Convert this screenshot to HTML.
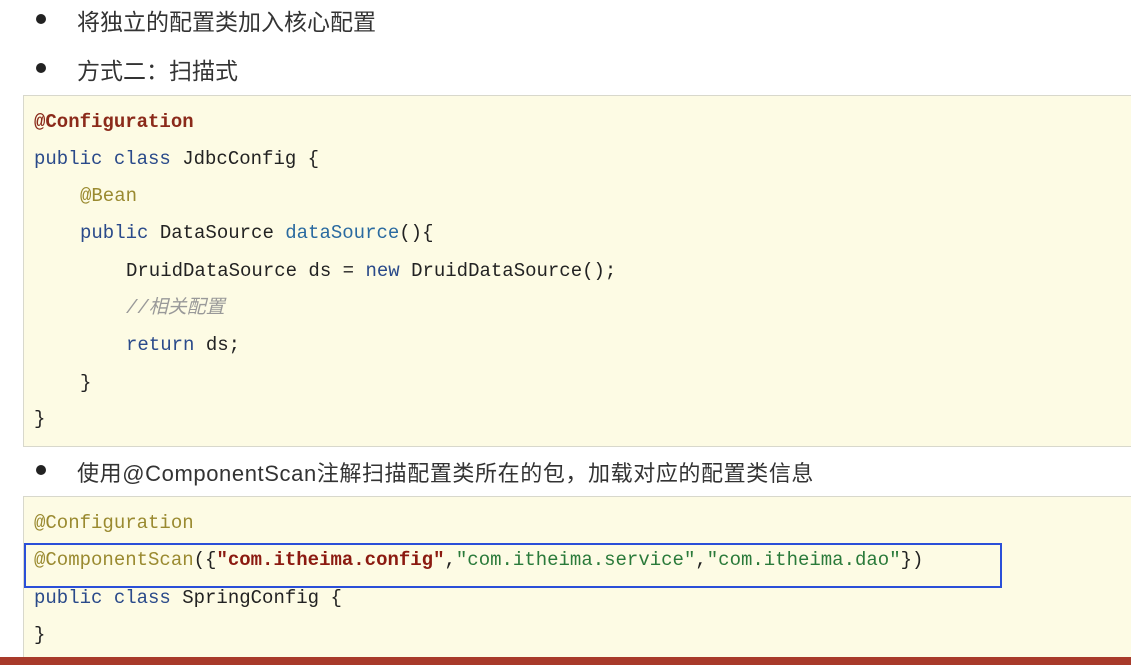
<!DOCTYPE html>
<html><head><meta charset="utf-8"><style>
body{margin:0;width:1131px;height:665px;background:#fff;position:relative;overflow:hidden;font-family:"Liberation Sans","Noto Sans CJK SC",sans-serif}
.b{position:absolute;color:#333;white-space:nowrap}
.dot{position:absolute;width:10px;height:10px;border-radius:50%;background:#222}
.box{position:absolute;left:23px;right:0;background:#fdfbe4;border:1px solid #d8d8cc;border-right:none}
.l{position:absolute;left:34px;font-family:"Liberation Mono","Noto Sans CJK SC",monospace;font-size:19px;color:#222;white-space:nowrap;line-height:24px}
.k{color:#2a4a8a}.an{color:#8b2a1a;font-weight:bold}.ol{color:#9a8a30}.m{color:#2a6aa0}.c{color:#999;font-style:italic}.s1{color:#8b1a10;font-weight:bold}.s2{color:#2a7a3a}
</style></head><body>
<div class="dot" style="left:36px;top:14px"></div><div class="b" style="left:77px;top:3px;font-size:23px">将独立的配置类加入核心配置</div>
<div class="dot" style="left:36px;top:63px"></div><div class="b" style="left:77px;top:52px;font-size:23px">方式二：扫描式</div>
<div class="box" style="top:95px;height:350px"></div>
<div class="l" style="top:110px"><span class="an">@Configuration</span></div>
<div class="l" style="top:147px"><span class="k">public class</span> JdbcConfig {</div>
<div class="l" style="top:184px;left:80px"><span class="ol">@Bean</span></div>
<div class="l" style="top:221px;left:80px"><span class="k">public</span> DataSource <span class="m">dataSource</span>(){</div>
<div class="l" style="top:259px;left:126px">DruidDataSource ds = <span class="k">new</span> DruidDataSource();</div>
<div class="l" style="top:296px;left:126px"><span class="c">//相关配置</span></div>
<div class="l" style="top:333px;left:126px"><span class="k">return</span> ds;</div>
<div class="l" style="top:371px;left:80px">}</div>
<div class="l" style="top:407px">}</div>
<div class="dot" style="left:36px;top:465px"></div><div class="b" style="left:77px;top:456px;font-size:22px;letter-spacing:0.6px">使用@ComponentScan注解扫描配置类所在的包，加载对应的配置类信息</div>
<div class="box" style="top:496px;height:161px"></div>
<div class="l" style="top:511px"><span class="ol">@Configuration</span></div>
<div class="l" style="top:548px"><span class="ol">@ComponentScan</span>({<span class="s1">"com.itheima.config"</span>,<span class="s2">"com.itheima.service"</span>,<span class="s2">"com.itheima.dao"</span>})</div>
<div style="position:absolute;left:24px;top:543px;width:974px;height:41px;border:2px solid #2b4fd8"></div>
<div class="l" style="top:586px"><span class="k">public class</span> SpringConfig {</div>
<div class="l" style="top:623px">}</div>
<div style="position:absolute;left:0;right:0;top:657px;height:8px;background:#a83a2a"></div>
</body></html>
